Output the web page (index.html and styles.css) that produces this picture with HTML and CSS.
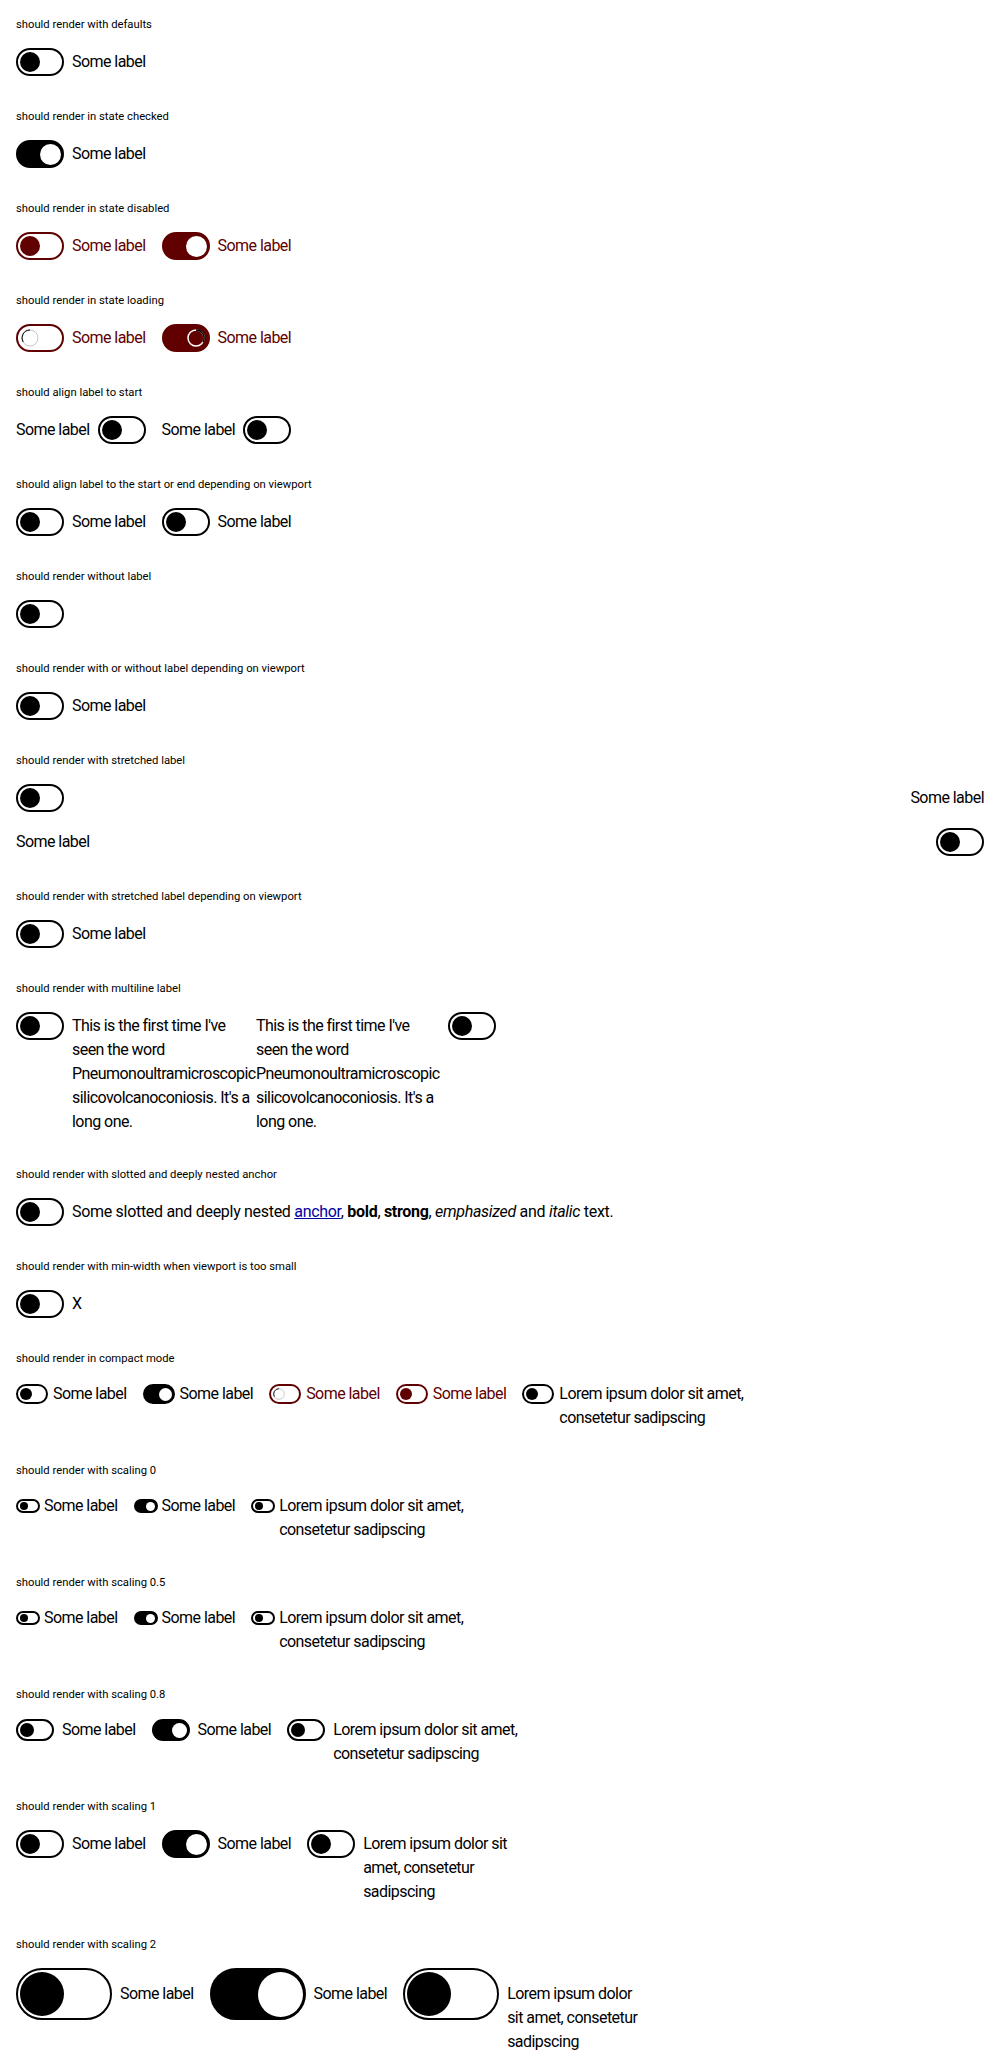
FILE: index.html
```html
<!DOCTYPE html>
<html lang="en">
<head>
<meta charset="utf-8">
<title>Switch</title>
<link rel="stylesheet" href="styles.css">
</head>
<body>

<div class="pg">
  <p class="title">should render with defaults</p>
  <div class="row">
    <div class="sw"><span class="tg"><span class="th"></span></span><span class="lb">Some label</span></div>
  </div>
</div>

<div class="pg">
  <p class="title">should render in state checked</p>
  <div class="row">
    <div class="sw on"><span class="tg"><span class="th"></span></span><span class="lb">Some label</span></div>
  </div>
</div>

<div class="pg">
  <p class="title">should render in state disabled</p>
  <div class="row">
    <div class="sw dis"><span class="tg"><span class="th"></span></span><span class="lb">Some label</span></div>
    <div class="sw dis on"><span class="tg"><span class="th"></span></span><span class="lb">Some label</span></div>
  </div>
</div>

<div class="pg">
  <p class="title">should render in state loading</p>
  <div class="row">
    <div class="sw ld"><span class="tg"><span class="spin"><svg viewBox="0 0 18 18"><circle cx="9" cy="9" r="8" fill="none" stroke="#c4c4c4" stroke-width="1"/><path d="M9 1 A8 8 0 0 0 2.07 13" fill="none" stroke="#000" stroke-width="1"/></svg></span></span><span class="lb">Some label</span></div>
    <div class="sw ld on"><span class="tg"><span class="spin"><svg viewBox="0 0 18 18"><circle cx="9" cy="9" r="8" fill="none" stroke="#fff" stroke-width="1.5"/><path d="M9 1 A8 8 0 0 1 15.93 13" fill="none" stroke="#000" stroke-width="1.5"/></svg></span></span><span class="lb">Some label</span></div>
  </div>
</div>

<div class="pg">
  <p class="title">should align label to start</p>
  <div class="row">
    <div class="sw"><span class="lb">Some label</span><span class="tg"><span class="th"></span></span></div>
    <div class="sw"><span class="lb">Some label</span><span class="tg"><span class="th"></span></span></div>
  </div>
</div>

<div class="pg">
  <p class="title">should align label to the start or end depending on viewport</p>
  <div class="row">
    <div class="sw"><span class="tg"><span class="th"></span></span><span class="lb">Some label</span></div>
    <div class="sw"><span class="tg"><span class="th"></span></span><span class="lb">Some label</span></div>
  </div>
</div>

<div class="pg">
  <p class="title">should render without label</p>
  <div class="row">
    <div class="sw"><span class="tg"><span class="th"></span></span></div>
  </div>
</div>

<div class="pg">
  <p class="title">should render with or without label depending on viewport</p>
  <div class="row">
    <div class="sw"><span class="tg"><span class="th"></span></span><span class="lb">Some label</span></div>
  </div>
</div>

<div class="pg">
  <p class="title">should render with stretched label</p>
  <div class="row">
    <div class="sw stretch"><span class="tg"><span class="th"></span></span><span class="lb">Some label</span></div>
    <div class="sw stretch"><span class="lb">Some label</span><span class="tg"><span class="th"></span></span></div>
  </div>
</div>

<div class="pg">
  <p class="title">should render with stretched label depending on viewport</p>
  <div class="row">
    <div class="sw"><span class="tg"><span class="th"></span></span><span class="lb">Some label</span></div>
  </div>
</div>

<div class="pg">
  <p class="title">should render with multiline label</p>
  <div class="row tight">
    <div class="sw narrow"><span class="tg"><span class="th"></span></span><span class="lb">This is the first time I've seen the word Pneumonoultramicroscopicsilicovolcanoconiosis. It's a long one.</span></div>
    <div class="sw narrow"><span class="lb">This is the first time I've seen the word Pneumonoultramicroscopicsilicovolcanoconiosis. It's a long one.</span><span class="tg"><span class="th"></span></span></div>
  </div>
</div>

<div class="pg">
  <p class="title">should render with slotted and deeply nested anchor</p>
  <div class="row">
    <div class="sw"><span class="tg"><span class="th"></span></span><span class="lb rich">Some slotted and deeply nested <a href="#">anchor</a>, <b>bold</b>, <strong>strong</strong>, <em>emphasized</em> and <i>italic</i> text.</span></div>
  </div>
</div>

<div class="pg">
  <p class="title">should render with min-width when viewport is too small</p>
  <div class="row">
    <div class="sw"><span class="tg"><span class="th"></span></span><span class="lb">X</span></div>
  </div>
</div>

<div class="pg">
  <p class="title">should render in compact mode</p>
  <div class="row">
    <div class="sw cp"><span class="tg"><span class="th"></span></span><span class="lb">Some label</span></div>
    <div class="sw cp on"><span class="tg"><span class="th"></span></span><span class="lb">Some label</span></div>
    <div class="sw cp ld"><span class="tg"><span class="spin"><svg viewBox="0 0 18 18"><circle cx="9" cy="9" r="8" fill="none" stroke="#c4c4c4" stroke-width="1.3"/><path d="M9 1 A8 8 0 0 0 2.07 13" fill="none" stroke="#000" stroke-width="1.3"/></svg></span></span><span class="lb">Some label</span></div>
    <div class="sw cp dis"><span class="tg"><span class="th"></span></span><span class="lb">Some label</span></div>
    <div class="sw cp narrow"><span class="tg"><span class="th"></span></span><span class="lb">Lorem ipsum dolor sit amet, consetetur sadipscing</span></div>
  </div>
</div>

<div class="pg">
  <p class="title">should render with scaling 0</p>
  <div class="row">
    <div class="sw s05"><span class="tg"><span class="th"></span></span><span class="lb">Some label</span></div>
    <div class="sw s05 on"><span class="tg"><span class="th"></span></span><span class="lb">Some label</span></div>
    <div class="sw s05 narrow"><span class="tg"><span class="th"></span></span><span class="lb">Lorem ipsum dolor sit amet, consetetur sadipscing</span></div>
  </div>
</div>

<div class="pg">
  <p class="title">should render with scaling 0.5</p>
  <div class="row">
    <div class="sw s05"><span class="tg"><span class="th"></span></span><span class="lb">Some label</span></div>
    <div class="sw s05 on"><span class="tg"><span class="th"></span></span><span class="lb">Some label</span></div>
    <div class="sw s05 narrow"><span class="tg"><span class="th"></span></span><span class="lb">Lorem ipsum dolor sit amet, consetetur sadipscing</span></div>
  </div>
</div>

<div class="pg">
  <p class="title">should render with scaling 0.8</p>
  <div class="row">
    <div class="sw s08"><span class="tg"><span class="th"></span></span><span class="lb">Some label</span></div>
    <div class="sw s08 on"><span class="tg"><span class="th"></span></span><span class="lb">Some label</span></div>
    <div class="sw s08 narrow"><span class="tg"><span class="th"></span></span><span class="lb">Lorem ipsum dolor sit amet, consetetur sadipscing</span></div>
  </div>
</div>

<div class="pg">
  <p class="title">should render with scaling 1</p>
  <div class="row">
    <div class="sw"><span class="tg"><span class="th"></span></span><span class="lb">Some label</span></div>
    <div class="sw on"><span class="tg"><span class="th"></span></span><span class="lb">Some label</span></div>
    <div class="sw narrow"><span class="tg"><span class="th"></span></span><span class="lb">Lorem ipsum dolor sit amet, consetetur sadipscing</span></div>
  </div>
</div>

<div class="pg">
  <p class="title">should render with scaling 2</p>
  <div class="row">
    <div class="sw s2"><span class="tg"><span class="th"></span></span><span class="lb">Some label</span></div>
    <div class="sw s2 on"><span class="tg"><span class="th"></span></span><span class="lb">Some label</span></div>
    <div class="sw s2 narrow"><span class="tg"><span class="th"></span></span><span class="lb">Lorem ipsum dolor sit amet, consetetur sadipscing</span></div>
  </div>
</div>

</body>
</html>
```

FILE: styles.css
```css
html, body {
  margin: 0;
  padding: 0;
  background: #fff;
  color: #000;
  font-family: Roboto, "Liberation Sans", sans-serif;
}

.pg {
  padding: 16px;
}

.title {
  box-sizing: border-box;
  height: 16px;
  margin: 0 0 16px;
  padding-top: 1px;
  font-size: 11.25px;
  line-height: 16px;
  color: #000;
}

.row {
  display: flex;
  flex-wrap: wrap;
  gap: 16px;
  align-items: flex-start;
}

.row.tight {
  gap: 0;
}

.sw {
  display: flex;
  align-items: flex-start;
  gap: 8px;
  font-size: 16px;
  line-height: 24px;
  letter-spacing: -0.55px;
  color: #000;
}

.sw.narrow {
  max-width: 240px;
}

.sw.stretch {
  width: 100%;
  justify-content: space-between;
}

.lb {
  padding-top: 2px;
  min-width: 0;
  overflow-wrap: break-word;
}

.lb.rich {
  letter-spacing: -0.3px;
}

.lb a {
  color: #00009f;
  text-decoration: underline;
}

.lb b,
.lb strong {
  font-weight: 700;
}

/* track */
.tg {
  flex: none;
  display: flex;
  align-items: center;
  box-sizing: border-box;
  width: 48px;
  height: 28px;
  padding: 0 2px;
  border: 2px solid #000;
  border-radius: 14px;
  background: #fff;
}

/* thumb */
.th {
  flex: none;
  width: 20px;
  height: 20px;
  border-radius: 50%;
  background: #000;
}

.on .tg {
  background: #000;
  justify-content: flex-end;
  padding-right: 1px;
}

.on .th {
  background: #fff;
  width: 21px;
  height: 21px;
}

/* disabled */
.dis,
.ld {
  color: #600000;
}

.dis .tg,
.ld .tg {
  border-color: #600000;
}

.dis .th {
  background: #600000;
}

.dis.on .tg,
.ld.on .tg {
  background: #600000;
}

.dis.on .th {
  background: #fff;
}

/* loading spinner */
.spin {
  flex: none;
  display: flex;
  align-items: center;
  justify-content: center;
  width: 20px;
  height: 20px;
}

.spin svg {
  display: block;
  width: 18px;
  height: 18px;
}

.ld.on .tg {
  padding-right: 2px;
}

/* compact */
.cp {
  gap: 5px;
}

.cp .tg {
  width: 32px;
  height: 20px;
  border-radius: 10px;
  margin-top: 2px;
}

.cp .th {
  width: 12px;
  height: 12px;
}

.cp.on .th {
  width: 13px;
  height: 13px;
}

.cp .lb {
  padding-top: 0;
}

.cp .spin {
  width: 12px;
  height: 12px;
}

.cp .spin svg {
  width: 12px;
  height: 12px;
}

/* scaling 0 / 0.5 */
.s05 {
  gap: 4px;
}

.s05 .tg {
  width: 24px;
  height: 14px;
  border-radius: 7px;
  margin-top: 5px;
}

.s05 .th {
  width: 8px;
  height: 8px;
}

.s05.on .th {
  width: 9px;
  height: 9px;
}

.s05 .lb {
  padding-top: 0;
}

/* scaling 0.8 */
.s08 .tg {
  width: 38px;
  height: 22px;
  border-radius: 11px;
  margin-top: 1px;
}

.s08 .th {
  width: 14px;
  height: 14px;
}

.s08.on .th {
  width: 15px;
  height: 15px;
}

.s08 .lb {
  padding-top: 0;
}

/* scaling 2 */
.s2 .tg {
  width: 96px;
  height: 52px;
  border-radius: 26px;
}

.s2 .th {
  width: 44px;
  height: 44px;
}

.s2.on .th {
  width: 45px;
  height: 45px;
}

.s2 .lb {
  padding-top: 14px;
}
```
